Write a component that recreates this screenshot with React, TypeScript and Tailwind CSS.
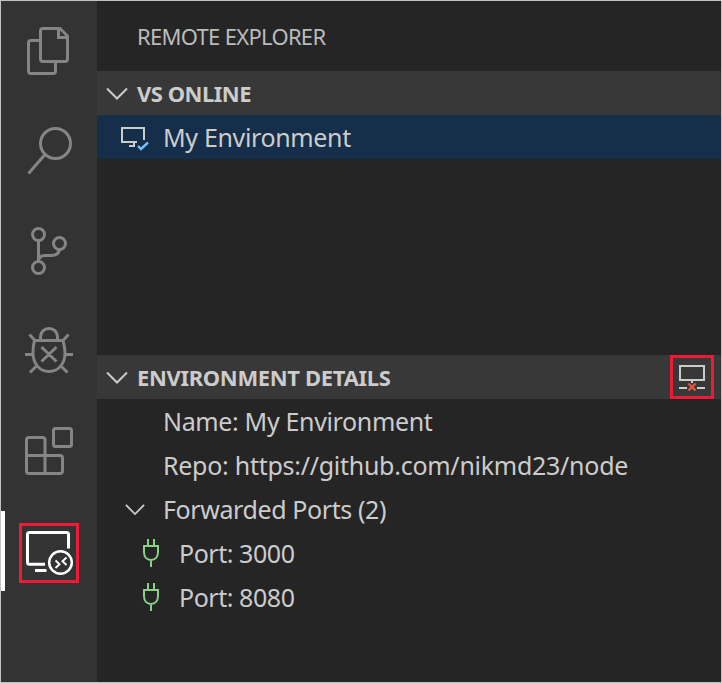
import type { ReactNode } from "react";

function ActivityItem({ label, active, children }: { label: string; active?: boolean; children: ReactNode }) {
  return (
    <button
      aria-label={label}
      className={`relative flex h-[100px] w-24 shrink-0 items-center justify-center ${active ? "text-white" : "text-[#858585]"}`}
    >
      {active && <span className="absolute top-[10px] left-0 h-20 w-1 bg-white" />}
      <svg width="96" height="100" viewBox="1 1 96 100" fill="none" stroke="currentColor" strokeWidth="3">
        {children}
      </svg>
      {active && <span className="absolute top-[22px] left-[18px] h-[60px] w-[60px] border-3 border-[#f01936]" />}
    </button>
  );
}

function ActivityBar() {
  return (
    <nav className="flex w-24 shrink-0 flex-col bg-[#333333]">
      <ActivityItem label="Explorer">
        <path d="M40 40.500H31Q28.500 40.500 28.500 43V71Q28.500 73.500 31 73.500H53Q55.500 73.500 55.500 71V62M43 28.500H60L67.500 36V59Q67.500 61.500 65 61.500H43Q40.500 61.500 40.500 59V31Q40.500 28.500 43 28.500ZM58.500 28.500V37.500H67.500" />
      </ActivityItem>
      <ActivityItem label="Search">
        <circle cx="55.500" cy="43.500" r="15" />
        <path d="M45 54.500L28.500 73.500" />
      </ActivityItem>
      <ActivityItem label="Source control">
        <circle cx="38.500" cy="34.500" r="6" />
        <circle cx="59.500" cy="43.500" r="6" />
        <circle cx="38.500" cy="67.500" r="6" />
        <path d="M38.500 40.500V61.500C38.500 57 41 55.500 45 55.500H51C56 55.500 59 53 59.500 49.500" />
      </ActivityItem>
      <ActivityItem label="Debug">
        <path d="M34.500 40.500H63C64 44 65 48 65 53C65 64 58 71.500 49 71.500C40 71.500 33 64 33 53C33 48 33.500 44 34.500 40.500ZM40.500 40V37C40.500 32 44 28.500 49 28.500C54 28.500 57.500 32 57.500 37V40M35 40.500L29.500 34.500M63 40.500L68.500 34.500M25 54.500H33M65 54.500H73M37.500 65L30 72.500M60 65L67.500 72.500M41.500 47L56.500 61.500M56.500 47L41.500 61.500" />
      </ActivityItem>
      <ActivityItem label="Extensions">
        <path d="M29 37.500H42.500Q45 37.500 45 40V55.500H60Q62.500 55.500 62.500 58V71Q62.500 73.500 60 73.500H29Q26.500 73.500 26.500 71V40Q26.500 37.500 29 37.500ZM26.500 55.500H45V73.500" />
        <rect x="53.500" y="28.500" width="18" height="18" rx="2" />
      </ActivityItem>
      <ActivityItem label="Remote explorer" active>
        <path d="M45 64.300H29.500Q27.500 64.300 27.500 62.300V34.500Q27.500 32.500 29.500 32.500H66.500Q68.500 32.500 68.500 34.500V48.500M35 70.500H46.500" />
        <circle cx="60.500" cy="62.500" r="11.300" strokeWidth="2.500" />
        <path d="M55.500 60.500L59.500 64.300L55.500 68M66.500 57.500L62.500 61.300L66.500 65" strokeWidth="1.900" />
      </ActivityItem>
    </nav>
  );
}

function Chevron({ small }: { small?: boolean }) {
  return (
    <svg className="shrink-0" width={small ? 20 : 22} height="13" viewBox="0 0 22 13" fill="none" stroke="#cccccc" strokeWidth="2">
      <path d="M1 1.500L11 11.500L21 1.500" />
    </svg>
  );
}

function Plug() {
  return (
    <svg className="shrink-0" width="18" height="28" viewBox="0 0 18 28" fill="none" stroke="#89d185" strokeWidth="2">
      <path d="M2 7H16V13C16 18 13 21 9 21C5 21 2 18 2 13ZM6 0V7M12 0V7M9 21V28" />
    </svg>
  );
}

export default function App() {
  return (
    <div className="flex h-[683px] w-[722px] overflow-hidden border border-[#bfc3c2] bg-[#252526] font-['Noto_Sans',sans-serif] text-[25px] leading-[44px] whitespace-nowrap text-[#cccccc]">
      <ActivityBar />
      <main className="flex min-w-0 flex-1 flex-col">
        <h1 className="h-[70px] pt-[13px] pl-10 text-[22px] text-[#bbbbbb]">
          <span className="tracking-[-0.7px]">REMOTE EXPLORER</span>
        </h1>
        <section className="h-[284px]">
          <h2 className="flex h-11 items-center bg-[#383838] pl-[9px] text-[22px] font-bold">
            <Chevron />
            <span className="ml-[9px] tracking-[-0.5px]">VS ONLINE</span>
          </h2>
          <div className="flex h-11 items-center bg-[#152e49] pl-6">
            <svg className="shrink-0" width="28" height="28" viewBox="0 0 28 28" fill="none" stroke="#cccccc" strokeWidth="2">
              <path d="M16 19H1V5H23V17M8 23H14M13 19V23" />
              <path d="M17 23L20 26L27 19.500" stroke="#75beff" strokeWidth="2.400" />
            </svg>
            <span className="ml-[14px] tracking-[-0.35px]">My Environment</span>
          </div>
        </section>
        <section>
          <h2 className="flex h-11 items-center bg-[#383838] pr-[7px] pl-[9px] text-[22px] font-bold">
            <Chevron />
            <span className="ml-[9px] tracking-[-0.34px]">ENVIRONMENT DETAILS</span>
            <button aria-label="Disconnect" className="ml-auto flex h-11 w-11 items-center justify-center border-3 border-[#f01936]">
              <svg className="shrink-0" width="38" height="38" viewBox="673 358 38 38" fill="none" stroke="#cccccc" strokeWidth="2">
                <path d="M680 366H704V380H680ZM692 380V383M679 388H687M697 388H705" />
                <path d="M688.500 383.500L695.500 390.500M695.500 383.500L688.500 390.500" stroke="#e8543f" strokeWidth="2.400" />
              </svg>
            </button>
          </h2>
          <div className="pl-[66px]"><span className="tracking-[-0.35px]">Name: My Environment</span></div>
          <div className="pl-[66px]"><span className="tracking-[-0.27px]">Repo: https://github.com/nikmd23/node</span></div>
          <div className="flex items-center pl-7">
            <Chevron small />
            <span className="ml-[18px] tracking-[-0.4px]">Forwarded Ports (2)</span>
          </div>
          <div className="flex items-center pl-[45px]">
            <Plug />
            <span className="ml-[19px] tracking-[-0.45px]">Port: 3000</span>
          </div>
          <div className="flex items-center pl-[45px]">
            <Plug />
            <span className="ml-[19px] tracking-[-0.45px]">Port: 8080</span>
          </div>
        </section>
      </main>
    </div>
  );
}
